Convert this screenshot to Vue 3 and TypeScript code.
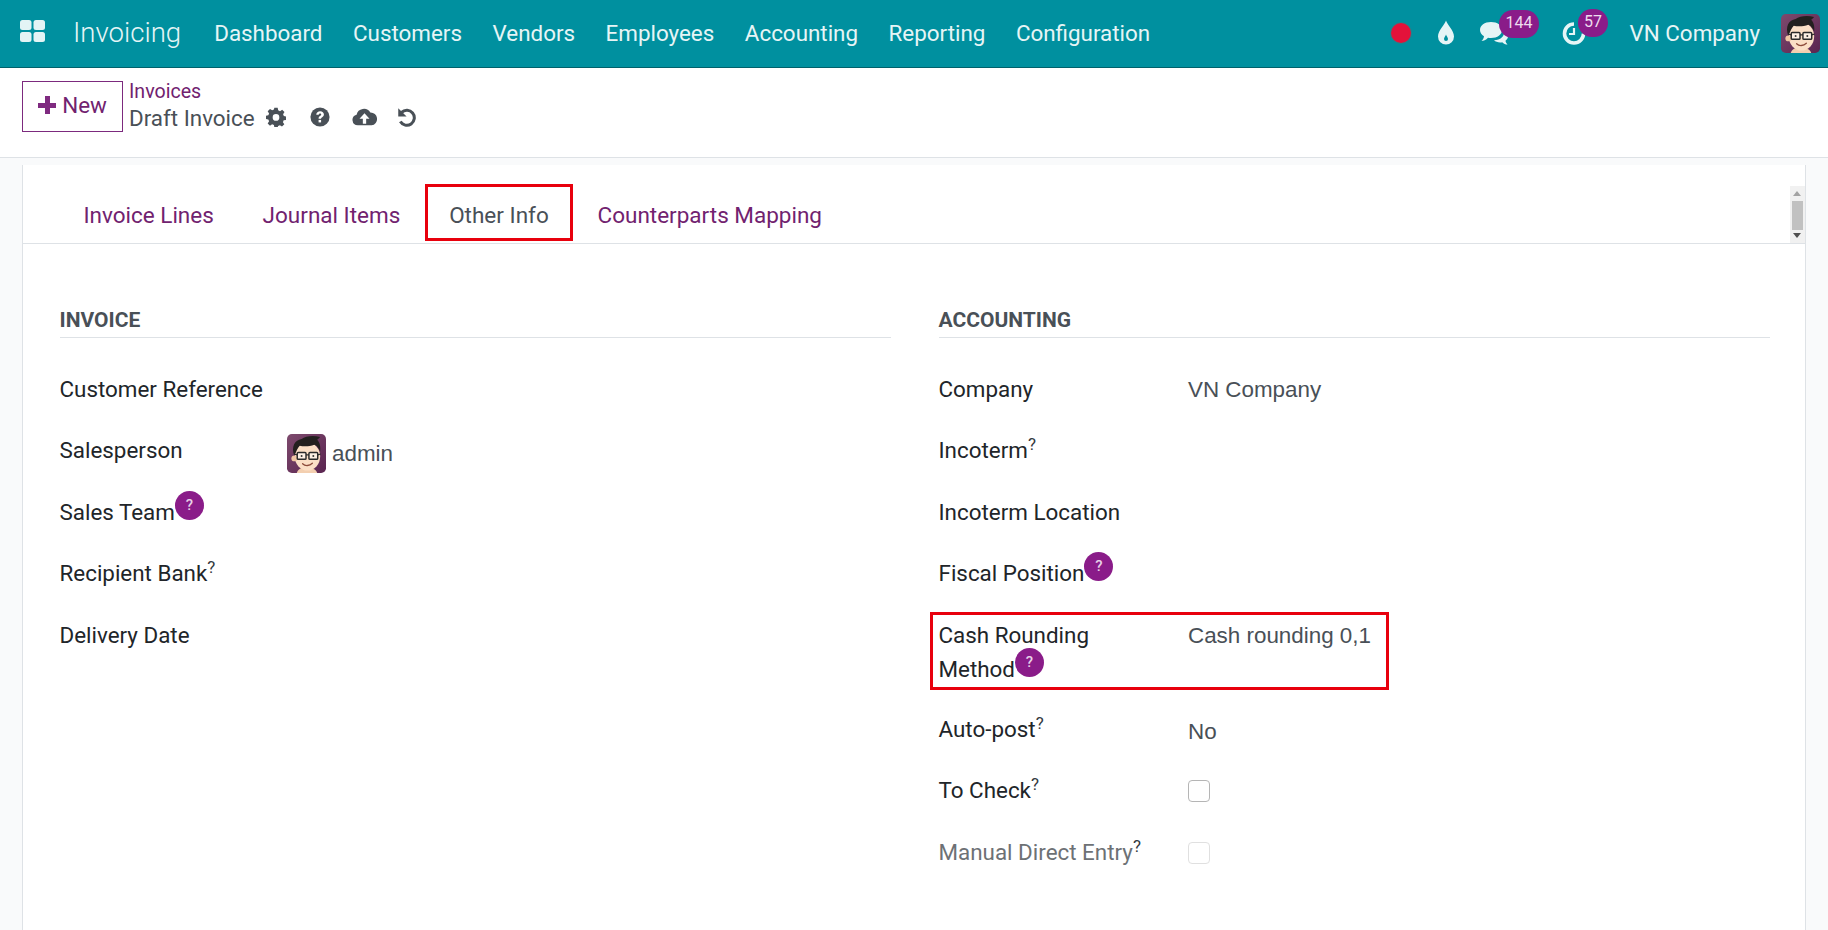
<script setup lang="ts">
interface Field { label: string; value?: string; help?: 'sup' | 'badge'; kind?: 'check' | 'user' | 'select'; muted?: boolean; tall?: boolean; wrap?: string }
const menu = ['Dashboard', 'Customers', 'Vendors', 'Employees', 'Accounting', 'Reporting', 'Configuration']
const tabs = ['Invoice Lines', 'Journal Items', 'Other Info', 'Counterparts Mapping']
const left: Field[] = [
  { label: 'Customer Reference' },
  { label: 'Salesperson', kind: 'user', value: 'admin' },
  { label: 'Sales Team', help: 'badge' },
  { label: 'Recipient Bank', help: 'sup' },
  { label: 'Delivery Date' }
]
const right: Field[] = [
  { label: 'Company', value: 'VN Company' },
  { label: 'Incoterm', help: 'sup' },
  { label: 'Incoterm Location' },
  { label: 'Fiscal Position', help: 'badge' },
  { label: 'Cash Rounding', wrap: 'Method', help: 'badge', value: 'Cash rounding 0,1', tall: true },
  { label: 'Auto-post', help: 'sup', value: 'No', kind: 'select' },
  { label: 'To Check', help: 'sup', kind: 'check' },
  { label: 'Manual Direct Entry', help: 'sup', kind: 'check', muted: true }
]
const groups = [
  { title: 'INVOICE', fields: left, cls: 'left' },
  { title: 'ACCOUNTING', fields: right, cls: 'right' }
]
</script>

<template>
  <div class="page">
    <svg class="defs" width="0" height="0" aria-hidden="true">
      <defs>
        <linearGradient id="avbg" x1="0" y1="0" x2="1" y2="1">
          <stop offset="0" stop-color="#7d4a6d" />
          <stop offset="1" stop-color="#5a2450" />
        </linearGradient>
        <symbol id="avatar" viewBox="0 0 40 40">
          <rect width="40" height="40" rx="5" fill="url(#avbg)" />
          <path d="M10 40c1-4 5-6 10-6s10 2 11 6z" fill="#f3cfb0" />
          <ellipse cx="21" cy="23" rx="13" ry="14.500" fill="#fbdfc6" />
          <circle cx="7.500" cy="25" r="3" fill="#f0c6a4" />
          <path d="M7.500 22C4 13 8 6 15 5c4-3 12-4 19-2-1 1-2 2-3 3 3 3 3.500 8 3 12-1-3-3-6-6-7-5 2-11 2-15 1-2 2-3 5-5.500 10z" fill="#23201f" />
          <rect x="10.500" y="19" width="9" height="7" rx="1" fill="#fff8" stroke="#2a2a2a" stroke-width="1.500" />
          <rect x="22.500" y="19" width="9" height="7" rx="1" fill="#fff8" stroke="#2a2a2a" stroke-width="1.500" />
          <path d="M19.500 21.500h3M7 20.500l3.500 1M31.500 21.500l3-1" stroke="#2a2a2a" stroke-width="1.300" />
          <circle cx="15" cy="22.500" r="1" fill="#333" />
          <circle cx="27" cy="22.500" r="1" fill="#333" />
          <path d="M16 30.500c2.500 2.500 7 2.500 10-.5" fill="none" stroke="#8c4a3a" stroke-width="1.300" stroke-linecap="round" />
        </symbol>
      </defs>
    </svg>

    <header class="nav">
      <svg class="apps" viewBox="0 0 25 22" aria-hidden="true">
        <rect x="0" y="0" width="11.500" height="10" rx="2.500" />
        <rect x="13.500" y="0" width="11.500" height="10" rx="2.500" />
        <rect x="0" y="12" width="11.500" height="10" rx="2.500" />
        <rect x="13.500" y="12" width="11.500" height="10" rx="2.500" />
      </svg>
      <span class="brand">Invoicing</span>
      <nav class="menu">
        <span v-for="m in menu" :key="m">{{ m }}</span>
      </nav>
      <div class="sys">
        <span class="rec"></span>
        <svg class="drop" viewBox="0 0 18 24" aria-hidden="true">
          <path fill-rule="evenodd" d="M9 0c1 4 8 10 8 16a8 8 0 0 1-16 0C1 10 8 4 9 0zM9 14c-.5 1.500-2 3-2 4.500a2 2 0 0 0 4 0C11 17 9.500 15.500 9 14z" />
        </svg>
        <span class="sysitem chat">
          <svg viewBox="0 0 30 24" aria-hidden="true">
            <path d="M12 1c6.500 0 11 3.500 11 8s-4.500 8-11 8c-1 0-2 0-3-.2C7 19 4.500 20 2.500 20c1.500-1.500 2.300-3 2.500-4.800C2.500 13.800 1 11.500 1 9c0-4.500 4.500-8 11-8z" />
            <path d="M25 10c2.500 1.200 4 3.200 4 5.300 0 1.700-1 3.300-2.500 4.400.2 1.300.8 2.500 2 3.800-2 0-3.800-.8-5.300-2.300-3 .6-6.400-.2-8.200-2 6.500 0 10.800-4 10-9.200z" />
          </svg>
          <b class="badge wide">144</b>
        </span>
        <span class="sysitem clock">
          <svg viewBox="0 0 26 26" aria-hidden="true">
            <path d="M13 4a9.500 9.500 0 1 0 9.500 9.500" fill="none" stroke-width="3.600" />
            <path d="M13 8v6h-5" fill="none" stroke-width="2.200" />
          </svg>
          <b class="badge">57</b>
        </span>
        <span class="company">VN Company</span>
        <svg class="nav-avatar" aria-hidden="true"><use href="#avatar" /></svg>
      </div>
    </header>

    <section class="panel">
      <button class="new"><span class="plus"></span>New</button>
      <div class="crumbs">
        <a>Invoices</a>
        <div class="current">
          <span>Draft Invoice</span>
          <svg class="ico gear" viewBox="0 0 24 24" aria-hidden="true">
            <path fill-rule="evenodd" d="M10 1h4l.6 3 2.200 1 2.600-1.700 2.800 2.800L20.500 8.700l.9 2.200 2.600.6v4l-2.800.5-.9 2.200 1.700 2.500-2.800 2.800-2.500-1.700-2.200.9-.5 1.800h-4l-.5-2.800-2.200-.9L4.800 22.500 2 19.700l1.700-2.500-.9-2.200L0 14.500v-4l2.800-.6.900-2.200L2 5.100 4.800 2.300l2.600 1.700L9.500 3.100zM12 8.500a4 4 0 1 0 0 8 4 4 0 0 0 0-8z" />
          </svg>
          <svg class="ico help" viewBox="0 0 24 24" aria-hidden="true">
            <circle cx="12" cy="12" r="11.500" />
            <path d="M7.500 9.300c0-2.800 2.200-4.300 4.700-4.300 2.600 0 4.500 1.600 4.500 3.900 0 3.100-3.400 3.100-3.400 5.300h-3c0-3.300 3.200-3.500 3.200-5.100 0-.8-.7-1.300-1.400-1.300-1.100 0-1.500.7-1.700 1.600z" fill="#fff" />
            <rect x="10.300" y="15.500" width="3" height="3" fill="#fff" />
          </svg>
          <svg class="ico cloud" viewBox="0 0 30 24" aria-hidden="true">
            <path fill-rule="evenodd" d="M7 22a6.500 6.500 0 0 1-1.500-12.800A9 9 0 0 1 22 6.500 7.800 7.800 0 0 1 23.500 22zM15 7.500 9 14h4v6h4v-6h4z" />
          </svg>
          <svg class="ico undo" viewBox="0 0 24 24" aria-hidden="true">
            <path d="M5.500 6.500A9 9 0 1 1 4 17.500" fill="none" stroke-width="3.600" />
            <path d="M1.500 1.500v10h10z" stroke="none" />
          </svg>
        </div>
      </div>
    </section>

    <main class="content">
      <div class="sheet">
        <div class="tabs">
          <span v-for="t in tabs" :key="t" class="tab" :class="{ active: t === 'Other Info' }">{{ t }}</span>
          <div class="scroll">
            <i class="up"></i>
            <i class="thumb"></i>
            <i class="down"></i>
          </div>
        </div>
        <div class="columns">
          <section v-for="g in groups" :key="g.title" class="group" :class="g.cls">
            <h3>{{ g.title }}</h3>
            <div class="fields">
              <div v-for="f in g.fields" :key="f.label" class="row" :class="{ muted: f.muted, tall: f.tall }">
                <label>
                  <template v-if="f.wrap">{{ f.label }}<br />{{ f.wrap }}</template>
                  <template v-else>{{ f.label }}</template>
                  <sup v-if="f.help === 'sup'">?</sup>
                  <span v-if="f.help === 'badge'" class="qbadge">?</span>
                </label>
                <div class="val" :class="f.kind">
                  <template v-if="f.kind === 'user'">
                    <svg class="user-avatar" aria-hidden="true"><use href="#avatar" /></svg>
                    <span>{{ f.value }}</span>
                  </template>
                  <span v-else-if="f.kind === 'check'" class="box"></span>
                  <span v-else-if="f.value">{{ f.value }}</span>
                </div>
              </div>
            </div>
          </section>
        </div>
      </div>
    </main>
  </div>
</template>

<style>
html, body { margin: 0; background: #f9fafb; }
</style>

<style scoped>
.page { height: 930px; overflow: hidden; display: flex; flex-direction: column; font-family: Roboto, sans-serif; font-size: 22.4px; color: #212529; background: #f9fafb; }
.defs { position: absolute; }

.nav { height: 65px; padding: 0 8px 2px 20px; flex: none; display: flex; align-items: center; background: #00909f; border-bottom: 1px solid #00616b; color: #e6f5f6; }
.apps { width: 25px; height: 22px; fill: #e3f4f5; margin-top: -3px; }
.brand { margin-left: 28px; font-size: 27.6px; font-weight: 300; }
.menu { display: flex; gap: 30.5px; margin-left: 33px; }
.sys { margin-left: auto; display: flex; align-items: center; }
.rec { width: 20px; height: 20px; border-radius: 50%; background: #e4123a; box-shadow: 0 0 0 1px #5f6b6d55; }
.drop { width: 18px; height: 25px; fill: #e6f5f6; margin-left: 26px; }
.sysitem { position: relative; display: block; }
.sysitem svg { display: block; }
.chat { margin-left: 24px; }
.chat svg { width: 30px; height: 24px; fill: #e6f5f6; }
.clock { margin-left: 52px; }
.clock svg { width: 26px; height: 26px; stroke: #e6f5f6; fill: none; }
.badge { position: absolute; top: -11px; left: 19px; min-width: 30px; height: 28px; padding: 0 1px; box-sizing: border-box; border-radius: 14px; background: #8a1c89; color: #eedcee; font-weight: 400; font-size: 16px; line-height: 25px; text-align: center; }
.badge.wide { left: 20px; width: 40px; }
.clock .badge { left: 17px; }
.company { margin-left: 42.5px; }
.nav-avatar { width: 39px; height: 39px; margin-left: 21px; margin-top: 2px; }

.panel { height: 90px; flex: none; box-sizing: border-box; padding: 13px 0 0 22px; background: #fff; border-bottom: 1px solid #dee2e6; display: flex; align-items: flex-start; }
.new { width: 101px; height: 51px; box-sizing: border-box; background: #fff; border: 1px solid #7c2a7e; color: #71226f; font: 400 22.4px Roboto, sans-serif; padding: 0 0 3px; display: flex; align-items: center; justify-content: center; gap: 6px; }
.plus { width: 18px; height: 18px; background: linear-gradient(#7f2a80, #7f2a80) center/100% 5px no-repeat, linear-gradient(#7f2a80, #7f2a80) center/5px 100% no-repeat; }
.crumbs { margin-left: 6px; }
.crumbs a { display: block; color: #71226f; font-size: 19.6px; line-height: 22px; }
.current { display: flex; align-items: center; color: #495057; line-height: 28px; margin-top: 1px; }
.ico { fill: #495057; stroke: #495057; stroke-width: 0; display: block; margin-top: -2px; }
.gear { width: 20px; height: 20px; margin-left: 11px; }
.help { width: 20px; height: 20px; margin-left: 24px; }
.cloud { width: 25px; height: 20px; margin-left: 22px; }
.undo { width: 20px; height: 20px; margin-left: 20px; }

.content { flex: 1; min-height: 0; padding: 7px 22px 0 22px; }
.sheet { height: 100%; background: #fff; border-left: 1px solid #dee2e6; border-right: 1px solid #dee2e6; }
.tabs { height: 79px; box-sizing: border-box; border-bottom: 1px solid #dee2e6; padding: 19px 0 0 36px; display: flex; align-items: stretch; position: relative; }
.tab { box-sizing: border-box; height: 59px; padding: 16px 23.4px 0; color: #71226f; font-size: 22.5px; line-height: 28px; border: 1px solid transparent; }
.tab.active { color: #495057; background: #fff; outline: 3px solid #e8000d; outline-offset: -3px; height: 57px; }
.scroll { position: absolute; right: 0; top: 21px; bottom: 0; width: 15px; background: #f1f1f1; }
.scroll i { position: absolute; left: 2px; display: block; }
.scroll .up { top: 5px; left: 3px; border: 4px solid transparent; border-bottom: 5px solid #a3a3a3; border-top: 0; }
.scroll .down { bottom: 5px; left: 3px; border: 4px solid transparent; border-top: 5px solid #505050; border-bottom: 0; }
.thumb { top: 15px; width: 11px; height: 29px; background: #c1c1c1; }

.columns { display: flex; padding: 56px 0 0 36.5px; }
.group { width: 831.5px; flex: none; }
.group.right { margin-left: 47.5px; }
h3 { margin: 0; height: 38px; box-sizing: border-box; padding-top: 8px; border-bottom: 1px solid #dee2e6; font-size: 21px; font-weight: 700; color: #495057; line-height: 24px; }
.fields { padding-top: 23.5px; }
.row { display: flex; height: 61.5px; align-items: flex-start; }
.row.tall { height: 94px; position: relative; }
.row.tall::after { content: ""; position: absolute; left: -8.5px; top: 4px; width: 459px; height: 78px; box-sizing: border-box; border: 3px solid #e8000d; pointer-events: none; }
label { line-height: 33.6px; padding-top: 11px; display: block; width: 249.5px; flex: none; }
.tall label { line-height: 34px; padding-top: 10.5px; }
.left label { width: 227.5px; }
.muted label { color: #6d7175; }
sup { font-size: 17px; font-weight: 400; line-height: 0; vertical-align: baseline; position: relative; top: -8px; color: #343a40; }
.qbadge { display: inline-block; width: 29px; height: 29px; margin: -14px 0; border-radius: 50%; background: #8a1c89; color: #e7d2e6; font-size: 15px; font-weight: 500; line-height: 28px; text-align: center; vertical-align: 10px; }
.val { color: #495057; font-family: "Liberation Sans", Arial, sans-serif; padding-top: 11px; line-height: 33.6px; display: flex; align-items: center; }
.val.select { padding-top: 13px; }
.user-avatar { width: 39px; height: 39px; margin-right: 6px; }
.box { width: 22px; height: 22px; margin-top: 6px; box-sizing: border-box; border: 1px solid #b5b5b5; border-radius: 4px; display: block; background: #fff; }
.muted .box { border-color: #e0e0e0; }
</style>
